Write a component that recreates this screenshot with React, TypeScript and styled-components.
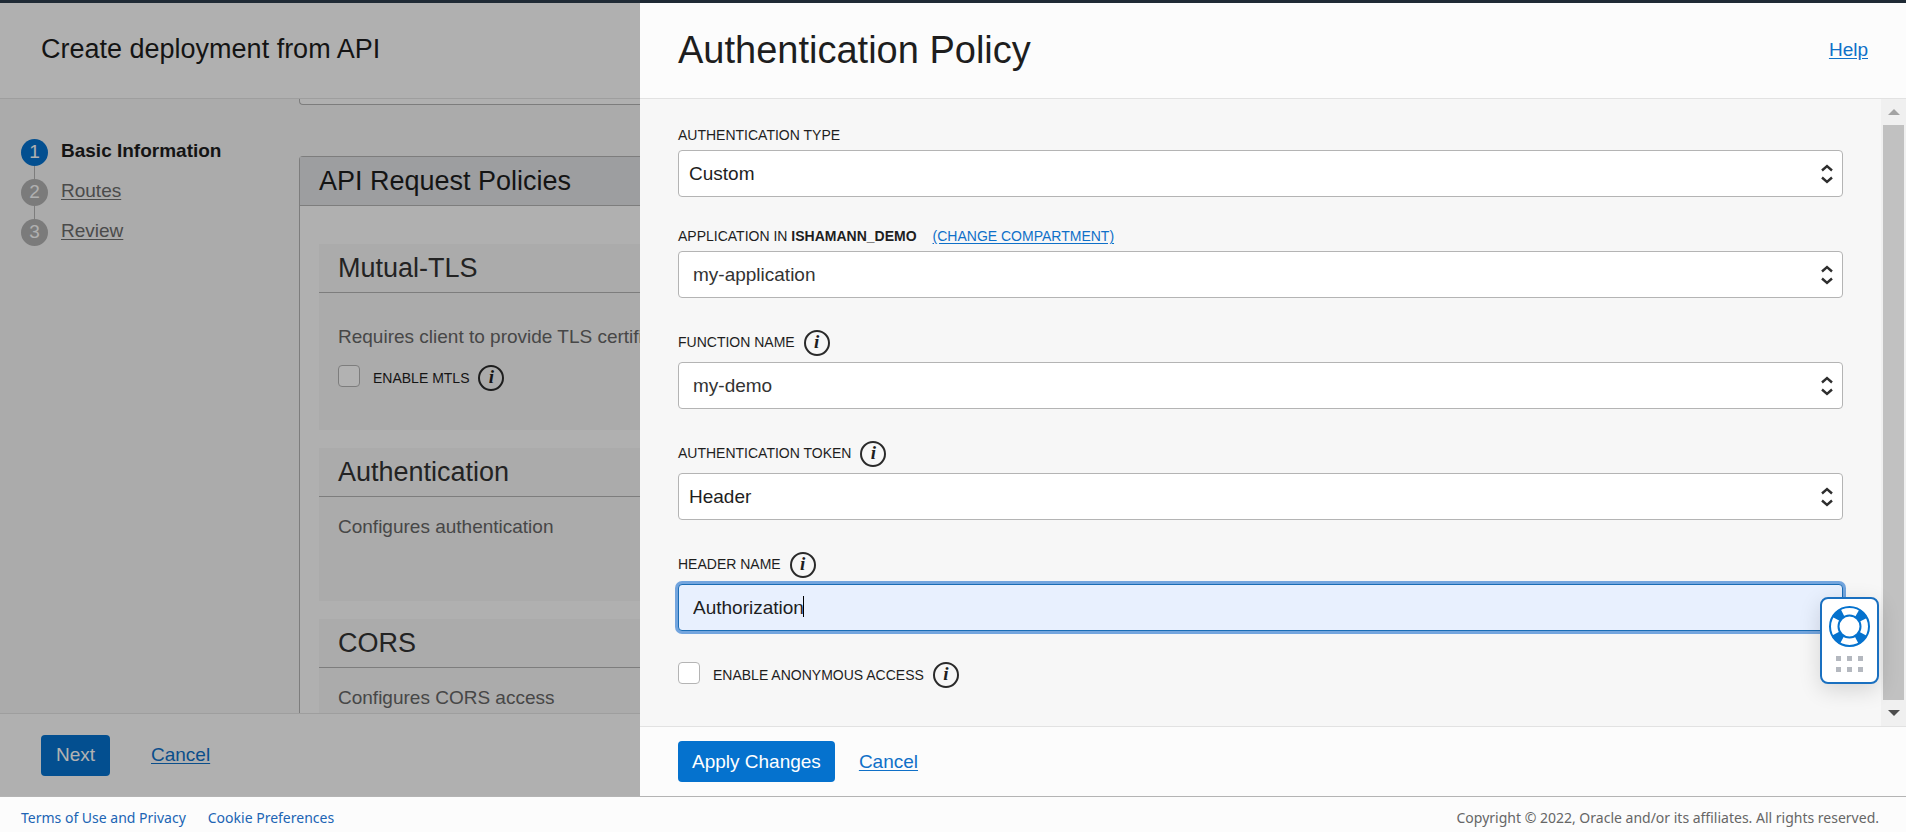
import React from "react";
import styled, { createGlobalStyle, css } from "styled-components";

const GlobalStyle = createGlobalStyle`
  *, *::before, *::after { box-sizing: border-box; }
  html, body, #root { margin: 0; height: 100%; }
  body {
    font-family: "Liberation Sans", Arial, sans-serif;
    font-size: 19px;
    line-height: 24px;
    color: #1e1e1e;
    background: #fcfcfc;
    overflow: hidden;
  }
  h1, h2, h3, p { margin: 0; font-weight: 400; }
  button, input, select { font: inherit; }
`;

const Shell = styled.div`
  display: flex;
  flex-direction: column;
  height: 100vh;
`;

const TopBar = styled.div`
  flex: none;
  height: 3px;
  background: #1f2a35;
`;

const Stage = styled.div`
  flex: 1;
  min-height: 0;
  display: grid;
  grid-template-columns: 640px minmax(0, 1fr);
`;

const Backdrop = styled.section`
  position: relative;
  display: flex;
  flex-direction: column;
  min-height: 0;
  overflow: hidden;

  &::after {
    content: "";
    position: absolute;
    inset: 0;
    background: rgba(0, 0, 0, 0.3);
  }
`;

const PanelHeader = styled.header`
  flex: none;
  display: flex;
  align-items: center;
  justify-content: space-between;
  height: 96px;
  padding: 0 38px 4px 41px;
  background: #fcfcfc;
  border-bottom: 1px solid #e2e2e2;
`;

const PageTitle = styled.h1`
  font-size: 27px;
  line-height: 32px;
`;

const PageBody = styled.div`
  flex: 1;
  min-height: 0;
  display: flex;
  overflow: hidden;
  background: #f5f5f5;
`;

const Steps = styled.ol`
  flex: none;
  width: 299px;
  margin: 0;
  padding: 40px 21px;
  list-style: none;
  display: flex;
  flex-direction: column;
  gap: 13px;
`;

const Step = styled.li`
  position: relative;
  display: flex;
  gap: 13px;
  height: 27px;

  &:not(:last-child)::after {
    content: "";
    position: absolute;
    left: 13px;
    top: 27px;
    width: 1px;
    height: 13px;
    background: #b4b4b4;
  }
`;

const StepNumber = styled.span<{ $active?: boolean }>`
  width: 27px;
  height: 27px;
  border-radius: 50%;
  text-align: center;
  line-height: 26px;
  color: #fcfcfc;
  background: ${(p) => (p.$active ? "#0572ce" : "#b0b0b0")};
`;

const StepLink = styled.a<{ $active?: boolean }>`
  text-underline-offset: 2px;
  ${(p) =>
    p.$active
      ? css`
          font-weight: 700;
          color: #1e1e1e;
          text-decoration: none;
        `
      : css`
          color: #6c6c6c;
          text-decoration: underline;
        `}
`;

const Policies = styled.div`
  flex: 1;
  min-width: 0;
  white-space: nowrap;
`;

const PreviousBox = styled.div`
  height: 6px;
  border: 1px solid #b4b4b4;
  border-width: 0 0 1px 1px;
  border-bottom-left-radius: 4px;
  background: #fcfcfc;
`;

const PolicyPanel = styled.section`
  margin-top: 51px;
  border: 1px solid #b4b4b4;
  border-right: 0;
  border-radius: 4px 0 0 4px;
  background: #fcfcfc;
`;

const PolicyTitle = styled.h2`
  height: 49px;
  padding-left: 19px;
  font-size: 27px;
  line-height: 48px;
  background: #e1e3e6;
  border-bottom: 1px solid #b4b4b4;
`;

const CardList = styled.div`
  display: flex;
  flex-direction: column;
  gap: 18px;
  padding: 38px 0 0 19px;
`;

const Card = styled.article<{ $roomy?: boolean }>`
  height: ${(p) => (p.$roomy ? 186 : 153)}px;
  background: #f5f5f5;
`;

const CardTitle = styled.h3`
  height: 49px;
  padding-left: 19px;
  font-size: 27px;
  line-height: 48px;
  color: #333;
  border-bottom: 1px solid #b4b4b4;
`;

const CardBody = styled.div<{ $roomy?: boolean }>`
  padding: ${(p) => (p.$roomy ? 32 : 18)}px 19px 0;
  color: #666;
`;

const CheckRow = styled.div<{ $spaced?: boolean }>`
  display: flex;
  align-items: flex-start;
  margin-top: ${(p) => (p.$spaced ? 16 : 0)}px;
  height: 27px;
`;

const Checkbox = styled.input`
  appearance: none;
  flex: none;
  width: 22px;
  height: 22px;
  margin: 0 13px 0 0;
  border: 1px solid #b4b4b4;
  border-radius: 4px;
  background: #fff;
`;

const Caption = styled.label`
  font-size: 14px;
  line-height: 17px;
  color: #1e1e1e;
  text-transform: uppercase;
`;

const CheckCaption = styled(Caption)`
  line-height: 27px;
`;

const InfoMark = styled.span`
  flex: none;
  width: 26px;
  height: 26px;
  margin-left: 9px;
  border: 2px solid #2a2a2a;
  border-radius: 50%;
  font: italic 700 19px/20px "Liberation Serif", "Times New Roman", serif;
  text-align: center;
  color: #1e1e1e;
`;

const PageFooter = styled.footer`
  flex: none;
  display: flex;
  align-items: center;
  gap: 41px;
  height: 83px;
  padding: 0 41px;
  background: #fcfcfc;
  border-top: 1px solid #e2e2e2;
`;

const PrimaryButton = styled.button`
  min-width: 69px;
  height: 41px;
  padding: 0 14px;
  border: 0;
  border-radius: 4px;
  color: #fff;
  background: #0572ce;
`;

const TextLink = styled.a`
  color: #0f70c8;
  text-decoration: underline;
  text-underline-offset: 2px;
`;

const Drawer = styled.section`
  display: flex;
  flex-direction: column;
  min-width: 0;
  min-height: 0;
`;

const DrawerHeader = styled(PanelHeader)`
  padding: 0 38px 2px;
`;

const DrawerTitle = styled.h2`
  font-size: 38px;
  line-height: 44px;
`;

const DrawerBody = styled.div`
  flex: 1;
  min-height: 0;
  display: flex;
  background: #f7f7f7;
`;

const Form = styled.form`
  flex: 1;
  min-width: 0;
  display: flex;
  flex-direction: column;
  gap: 31px;
  padding: 28px 38px 0;
`;

const Field = styled.div`
  display: flex;
  flex-direction: column;
  gap: 6px;
`;

const LabelRow = styled.div`
  display: flex;
  align-items: center;
`;

const InfoLabelRow = styled(LabelRow)`
  height: 27px;
`;

const CompartmentLink = styled(TextLink)`
  margin-left: 16px;
  font-size: 14px;
  line-height: 17px;
  text-transform: uppercase;
`;

const Control = styled.div`
  position: relative;
  display: flex;
`;

const controlBox = css`
  width: 100%;
  height: 47px;
  border: 1px solid #b4b4b4;
  border-radius: 4px;
  background: #fff;
  color: #1e1e1e;
  outline: none;
`;

const Select = styled.select<{ $inset?: boolean }>`
  ${controlBox}
  appearance: none;
  padding: 0 40px 0 ${(p) => (p.$inset ? 14 : 10)}px;
  color: ${(p) => (p.$inset ? "#333" : "#1e1e1e")};
`;

const Arrows = styled.svg`
  position: absolute;
  right: 10px;
  top: 14px;
  pointer-events: none;
`;

const TextInput = styled.input`
  ${controlBox}
  padding: 0 14px;
  border-color: #1b6db5;
  background: #e8f0fe;
  box-shadow: 0 0 0 3px #73a5de;
  caret-color: transparent;
`;

const Caret = styled.span`
  position: absolute;
  left: 125px;
  top: 12px;
  width: 1px;
  height: 21px;
  background: #000;
`;

const Track = styled.div`
  flex: none;
  display: flex;
  flex-direction: column;
  align-items: center;
  width: 25px;
  background: #f0f0f0;
`;

const TrackEnd = styled.div`
  flex: none;
  display: grid;
  place-items: center;
  height: 26px;
`;

const Thumb = styled.div`
  flex: 1;
  width: 21px;
  background: #c1c1c1;
`;

const DrawerFooter = styled(PageFooter)`
  gap: 24px;
  height: 70px;
  padding: 0 38px;
`;

const HelpWidget = styled.button`
  position: fixed;
  right: 27px;
  bottom: 148px;
  display: flex;
  flex-direction: column;
  align-items: center;
  gap: 9px;
  width: 59px;
  height: 87px;
  padding: 7px 0 0;
  border: 2px solid #1a70c0;
  border-radius: 8px;
  background: #fff;
  box-shadow: 0 6px 22px rgba(0, 0, 0, 0.14);
`;

const Legal = styled.footer`
  flex: none;
  display: flex;
  justify-content: space-between;
  align-items: center;
  height: 36px;
  padding: 7px 27px 0 21px;
  border-top: 1px solid #b4b4b4;
  font-family: "Noto Sans", "Segoe UI", sans-serif;
  font-size: 14px;
  line-height: 20px;
  color: #666;
  background: #fcfcfc;
`;

const LegalLinks = styled.nav`
  display: flex;
  gap: 22px;
`;

const LegalLink = styled.a`
  color: #2064b4;
  text-decoration: none;
`;

function Info() {
  return <InfoMark>i</InfoMark>;
}

function SelectField(props: {
  id: string;
  label: React.ReactNode;
  value: string;
  info?: boolean;
  inset?: boolean;
  extra?: React.ReactNode;
}) {
  const Row = props.info ? InfoLabelRow : LabelRow;
  return (
    <Field>
      <Row>
        <Caption htmlFor={props.id}>{props.label}</Caption>
        {props.info && <Info />}
        {props.extra}
      </Row>
      <Control>
        <Select id={props.id} $inset={props.inset} defaultValue={props.value}>
          <option>{props.value}</option>
        </Select>
        <Arrows width="12" height="20" viewBox="0 0 12 20" fill="none" stroke="#2e2e2e" strokeWidth="2.4">
          <path d="M1 6.5 6 2l5 4.5M1 13.5 6 18l5-4.5" />
        </Arrows>
      </Control>
    </Field>
  );
}

function Lifebuoy() {
  return (
    <svg width="41" height="41" viewBox="0 0 41 41" fill="none">
      <circle cx="20.5" cy="20.5" r="15.5" stroke="#0572ce" strokeWidth="9" strokeDasharray="9 15.347" strokeDashoffset="-7.67" />
      <circle cx="20.5" cy="20.5" r="19.5" stroke="#0572ce" strokeWidth="2" />
      <circle cx="20.5" cy="20.5" r="11" stroke="#0572ce" strokeWidth="2" />
    </svg>
  );
}

function Grip() {
  return (
    <svg width="27" height="16" viewBox="0 0 27 16" fill="#b4b8bf">
      {[0, 11, 22].map((x) =>
        [0, 11].map((y) => <rect key={`${x}-${y}`} x={x} y={y} width="5" height="5" />)
      )}
    </svg>
  );
}

export default function App() {
  return (
    <Shell>
      <GlobalStyle />
      <TopBar />
      <Stage>
        <Backdrop>
          <PanelHeader>
            <PageTitle>Create deployment from API</PageTitle>
          </PanelHeader>
          <PageBody>
            <Steps>
              <Step>
                <StepNumber $active>1</StepNumber>
                <StepLink href="#basic" $active>Basic Information</StepLink>
              </Step>
              <Step>
                <StepNumber>2</StepNumber>
                <StepLink href="#routes">Routes</StepLink>
              </Step>
              <Step>
                <StepNumber>3</StepNumber>
                <StepLink href="#review">Review</StepLink>
              </Step>
            </Steps>
            <Policies>
              <PreviousBox />
              <PolicyPanel>
                <PolicyTitle>API Request Policies</PolicyTitle>
                <CardList>
                  <Card $roomy>
                    <CardTitle>Mutual-TLS</CardTitle>
                    <CardBody $roomy>
                      <p>Requires client to provide TLS certificates</p>
                      <CheckRow $spaced>
                        <Checkbox type="checkbox" id="mtls" />
                        <CheckCaption htmlFor="mtls">Enable mTLS</CheckCaption>
                        <Info />
                      </CheckRow>
                    </CardBody>
                  </Card>
                  <Card>
                    <CardTitle>Authentication</CardTitle>
                    <CardBody>
                      <p>Configures authentication</p>
                    </CardBody>
                  </Card>
                  <Card>
                    <CardTitle>CORS</CardTitle>
                    <CardBody>
                      <p>Configures CORS access</p>
                    </CardBody>
                  </Card>
                </CardList>
              </PolicyPanel>
            </Policies>
          </PageBody>
          <PageFooter>
            <PrimaryButton type="button">Next</PrimaryButton>
            <TextLink href="#cancel">Cancel</TextLink>
          </PageFooter>
        </Backdrop>

        <Drawer>
          <DrawerHeader>
            <DrawerTitle>Authentication Policy</DrawerTitle>
            <TextLink href="#help">Help</TextLink>
          </DrawerHeader>
          <DrawerBody>
            <Form>
              <SelectField id="type" label="Authentication Type" value="Custom" />
              <SelectField
                id="application"
                label={<>Application in <b>ishamann_demo</b></>}
                value="my-application"
                inset
                extra={<CompartmentLink href="#compartment">(Change Compartment)</CompartmentLink>}
              />
              <SelectField id="function" label="Function Name" value="my-demo" info inset />
              <SelectField id="token" label="Authentication Token" value="Header" info />
              <Field>
                <InfoLabelRow>
                  <Caption htmlFor="header">Header Name</Caption>
                  <Info />
                </InfoLabelRow>
                <Control>
                  <TextInput id="header" type="text" defaultValue="Authorization" />
                  <Caret />
                </Control>
              </Field>
              <CheckRow>
                <Checkbox type="checkbox" id="anonymous" />
                <CheckCaption htmlFor="anonymous">Enable Anonymous Access</CheckCaption>
                <Info />
              </CheckRow>
            </Form>
            <Track>
              <TrackEnd>
                <svg width="12" height="6" viewBox="0 0 12 6" fill="#a3a3a3">
                  <path d="M0 6 6 0l6 6z" />
                </svg>
              </TrackEnd>
              <Thumb />
              <TrackEnd>
                <svg width="12" height="6" viewBox="0 0 12 6" fill="#4d4d4d">
                  <path d="M0 0l6 6 6-6z" />
                </svg>
              </TrackEnd>
            </Track>
          </DrawerBody>
          <DrawerFooter>
            <PrimaryButton type="button">Apply Changes</PrimaryButton>
            <TextLink href="#cancel-policy">Cancel</TextLink>
          </DrawerFooter>
        </Drawer>
      </Stage>
      <Legal>
        <LegalLinks>
          <LegalLink href="#terms">Terms of Use and Privacy</LegalLink>
          <LegalLink href="#cookies">Cookie Preferences</LegalLink>
        </LegalLinks>
        <span>Copyright © 2022, Oracle and/or its affiliates. All rights reserved.</span>
      </Legal>
      <HelpWidget type="button" aria-label="Support">
        <Lifebuoy />
        <Grip />
      </HelpWidget>
    </Shell>
  );
}
